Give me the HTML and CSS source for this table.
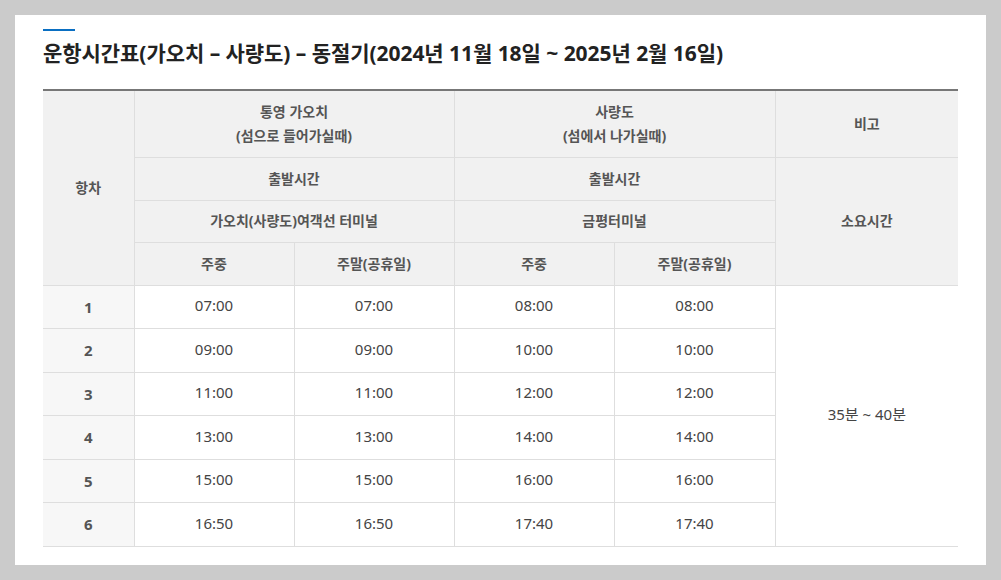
FILE: index.html
```html
<!DOCTYPE html>
<html lang="ko">
<head>
<meta charset="utf-8">
<link rel="stylesheet" href="styles.css">
</head>
<body>
<div class="panel">
  <div class="bar"></div>
  <h2 class="title">운항시간표(가오치 – 사량도) – 동절기(2024년 11월 18일 ~ 2025년 2월 16일)</h2>
  <table class="tt">
    <colgroup>
      <col class="c0"><col class="c1"><col class="c1"><col class="c1"><col class="c4"><col class="c5">
    </colgroup>
    <thead>
      <tr class="h1">
        <th rowspan="4" class="first">항차</th>
        <th colspan="2">통영 가오치<br>(섬으로 들어가실때)</th>
        <th colspan="2">사량도<br>(섬에서 나가실때)</th>
        <th class="last">비고</th>
      </tr>
      <tr class="h2">
        <th colspan="2">출발시간</th>
        <th colspan="2">출발시간</th>
        <th rowspan="3" class="last">소요시간</th>
      </tr>
      <tr class="h3">
        <th colspan="2">가오치(사량도)여객선 터미널</th>
        <th colspan="2">금평터미널</th>
      </tr>
      <tr class="h4">
        <th>주중</th><th>주말(공휴일)</th><th>주중</th><th>주말(공휴일)</th>
      </tr>
    </thead>
    <tbody>
      <tr><th class="first">1</th><td>07:00</td><td>07:00</td><td>08:00</td><td>08:00</td><td rowspan="6" class="last">35분 ~ 40분</td></tr>
      <tr><th class="first">2</th><td>09:00</td><td>09:00</td><td>10:00</td><td>10:00</td></tr>
      <tr><th class="first">3</th><td>11:00</td><td>11:00</td><td>12:00</td><td>12:00</td></tr>
      <tr><th class="first">4</th><td>13:00</td><td>13:00</td><td>14:00</td><td>14:00</td></tr>
      <tr><th class="first">5</th><td>15:00</td><td>15:00</td><td>16:00</td><td>16:00</td></tr>
      <tr><th class="first">6</th><td>16:50</td><td>16:50</td><td>17:40</td><td>17:40</td></tr>
    </tbody>
  </table>
</div>
</body>
</html>
```

FILE: styles.css
```css
html, body {
  margin: 0;
  padding: 0;
  background: #cbcbcb;
}
body {
  padding: 15px 15px 15px 15px;
  font-family: "Noto Sans", "Noto Sans CJK KR", sans-serif;
  color: #333;
}
.panel {
  background: #fff;
  height: 550px;
  box-sizing: border-box;
  padding: 14px 28px 0 28px;
}
.bar {
  width: 32px;
  height: 2px;
  background: #0a6fc2;
}
.title {
  margin: 7px 0 0 0;
  font-size: 21px;
  line-height: 30px;
  font-weight: 700;
  color: #222;
  letter-spacing: -0.05px;
}
.tt {
  margin-top: 21px;
  width: 915px;
  border-collapse: collapse;
  table-layout: fixed;
  border-top: 2px solid #777;
}
.c0 { width: 91px; }
.c1 { width: 160px; }
.c4 { width: 161px; }
.c5 { width: 183px; }
.tt th, .tt td {
  border: 1px solid #dedede;
  text-align: center;
  vertical-align: middle;
  padding: 0;
  font-size: 14px;
  line-height: 24px;
}
.tt th {
  background: #f1f1f1;
  color: #555;
  font-weight: 700;
}
.tt .first { border-left: none; }
.tt .last { border-right: none; }
.tt thead tr:first-child th { border-top: none; }
.h1 { height: 67px; }
.h2 { height: 43px; }
.h3 { height: 42px; }
.h4 { height: 43px; }
.tt tbody tr { height: 43.5px; }
.tt tbody th {
  background: #f7f7f7;
  font-size: 15px;
}
.tt td {
  color: #444;
  font-size: 15px;
  background: #fff;
  padding-bottom: 3px;
}
```
